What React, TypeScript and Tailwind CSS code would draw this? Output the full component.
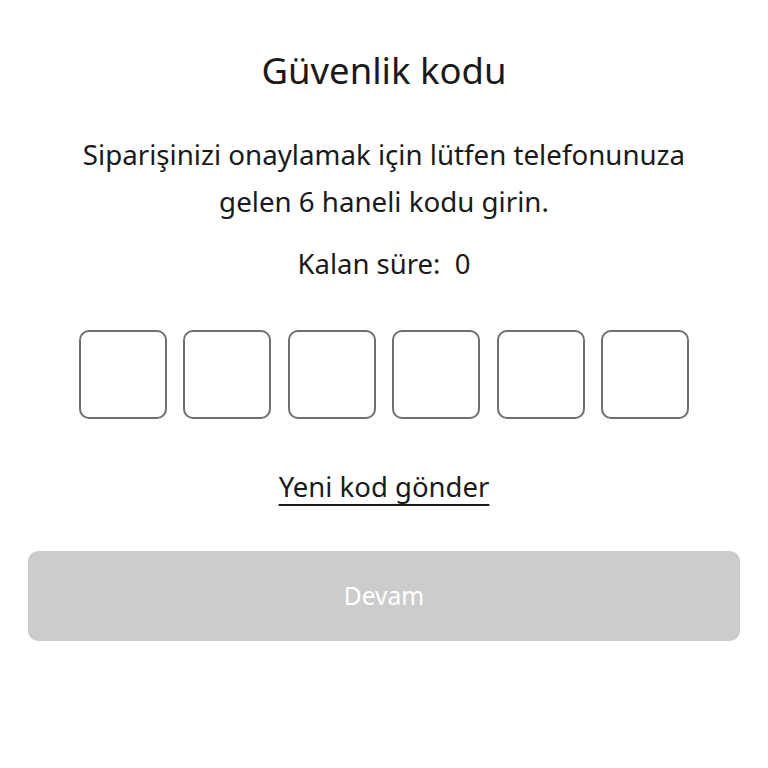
import React from "react";

const digits = [0, 1, 2, 3, 4, 5];

export default function App() {
  return (
    <div
      className="min-h-[768px] w-full bg-white text-[#1a1a1a] flex flex-col items-center px-7"
      style={{ fontFamily: '"Noto Sans", "Open Sans", sans-serif' }}
    >
      <h1 className="mt-[44px] text-[36.5px] leading-[52px] font-normal">Güvenlik kodu</h1>

      <p className="mt-[35px] text-[27.7px] leading-[47px] text-center whitespace-nowrap">
        Siparişinizi onaylamak için lütfen telefonunuza
        <br />
        gelen 6 haneli kodu girin.
      </p>

      <div className="mt-[16px] text-[27.5px] leading-[46px]">Kalan süre:&nbsp; 0</div>

      {/* code inputs */}
      <div className="mt-[43px] flex gap-[16.6px]">
        {digits.map((d) => (
          <input
            key={d}
            type="text"
            maxLength={1}
            className="w-[88px] h-[89px] rounded-[10px] border-2 border-[#707070] bg-white text-center text-[32px] outline-none"
          />
        ))}
      </div>

      <a
        href="#"
        className="mt-[48px] text-[27.5px] leading-[40px] underline underline-offset-[7px] decoration-[2px] text-[#1a1a1a]"
      >
        Yeni kod gönder
      </a>

      <button
        disabled
        className="mt-[44px] w-full h-[90px] rounded-[10px] bg-[#cccccc] text-white text-[24.5px]"
      >
        Devam
      </button>
    </div>
  );
}
